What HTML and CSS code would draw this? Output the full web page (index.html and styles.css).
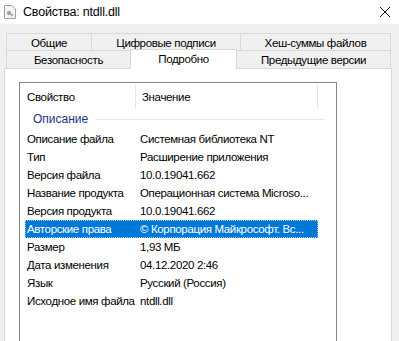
FILE: index.html
```html
<!DOCTYPE html>
<html lang="ru">
<head>
    <meta charset="UTF-8">
    <title>Свойства: ntdll.dll</title>
    <link rel="stylesheet" href="styles.css">
</head>
<body>
    <div class="titlebar">
        <svg class="app-icon" width="12" height="14" viewBox="0 0 12 14">
            <path d="M0.5 0.5 H8 L11.5 4 V13.5 H0.5 Z" fill="#f4f4f4" stroke="#a0a0a0"/>
            <circle cx="5" cy="8" r="2" fill="#9a9a9a"/>
            <circle cx="8" cy="10" r="1.4" fill="#b0b0b0"/>
        </svg>
        <span class="title">Свойства: ntdll.dll</span>
        <svg class="close" width="12" height="12" viewBox="0 0 12 12">
            <path d="M1 1 L11 11 M11 1 L1 11" stroke="#111" stroke-width="1"/>
        </svg>
    </div>

    <div class="window">
        <div class="tab-row back">
            <div class="tab w-general">Общие</div>
            <div class="tab w-sign">Цифровые подписи</div>
            <div class="tab w-hash">Хеш-суммы файлов</div>
        </div>
        <div class="tab-row front">
            <div class="tab w-sec">Безопасность</div>
            <div class="tab w-det active">Подробно</div>
            <div class="tab w-prev">Предыдущие версии</div>
        </div>

        <div class="panel">
            <div class="list">
                <div class="list-head">
                    <div class="col-name">Свойство</div>
                    <div class="col-value">Значение</div>
                    <div class="col-rest"></div>
                </div>
                <div class="group">
                    <span>Описание</span>
                    <div class="group-line"></div>
                </div>
                <div class="row"><div class="name">Описание файла</div><div class="value">Системная библиотека NT</div></div>
                <div class="row"><div class="name">Тип</div><div class="value">Расширение приложения</div></div>
                <div class="row"><div class="name">Версия файла</div><div class="value">10.0.19041.662</div></div>
                <div class="row"><div class="name">Название продукта</div><div class="value">Операционная система Microso...</div></div>
                <div class="row"><div class="name">Версия продукта</div><div class="value">10.0.19041.662</div></div>
                <div class="row selected"><div class="name">Авторские права</div><div class="value">© Корпорация Майкрософт. Вс...</div></div>
                <div class="row"><div class="name">Размер</div><div class="value">1,93 МБ</div></div>
                <div class="row"><div class="name">Дата изменения</div><div class="value">04.12.2020 2:46</div></div>
                <div class="row"><div class="name">Язык</div><div class="value">Русский (Россия)</div></div>
                <div class="row"><div class="name">Исходное имя файла</div><div class="value">ntdll.dll</div></div>
            </div>
        </div>
    </div>
</body>
</html>
```

FILE: styles.css
```css
body {
    margin: 0;
    padding: 0;
    width: 399px;
    height: 341px;
    overflow: hidden;
    font-family: 'Liberation Sans', Arial, sans-serif;
    font-size: 11.5px;
    letter-spacing: -0.35px;
    color: #000000;
    background-color: #f0f0f0;
}
.titlebar {
    height: 24px;
    background-color: #ffffff;
    display: flex;
    align-items: center;
    padding-left: 4px;
    padding-right: 8px;
}
.app-icon {
    margin-right: 7px;
}
.title {
    font-size: 12.5px;
    letter-spacing: -0.2px;
    flex: 1;
}
.window {
    padding-top: 9px;
}
.tab-row {
    display: flex;
    margin-left: 6px;
    width: 385px;
}
.tab {
    box-sizing: border-box;
    border: 1px solid #d9d9d9;
    border-bottom: none;
    margin-left: -1px;
    display: flex;
    justify-content: center;
    align-items: center;
    background-color: #f0f0f0;
    white-space: nowrap;
}
.tab:first-child {
    margin-left: 0;
}
.back .tab {
    height: 17px;
    padding-top: 1px;
}
.front {
    height: 18px;
    align-items: flex-end;
}
.front .tab {
    height: 18px;
    padding-top: 1px;
}
.front .tab.active {
    height: 20px;
    background-color: #ffffff;
    position: relative;
    z-index: 1;
    margin-bottom: -1px;
    padding-bottom: 2px;
}
.w-general { width: 86px; }
.w-sign { width: 150px; }
.w-hash { width: 151px; }
.w-sec { width: 125px; }
.w-det { width: 107px; }
.w-prev { width: 155px; }
.panel {
    margin-left: 4px;
    width: 388px;
    height: 280px;
    box-sizing: border-box;
    background-color: #ffffff;
    border: 1px solid #d9d9d9;
    padding: 13px 0 0 14px;
}
.list {
    width: 318px;
    height: 270px;
    box-sizing: border-box;
    border: 1px solid #828790;
    border-bottom: none;
    padding-left: 5px;
}
.list-head {
    display: flex;
    height: 25px;
    padding-top: 2px;
    box-sizing: border-box;
}
.list-head > div {
    display: flex;
    align-items: center;
    box-sizing: border-box;
}
.col-name {
    width: 111px;
    padding-left: 2px;
    border-right: 1px solid #e5e5e5;
}
.col-value {
    width: 182px;
    padding-left: 6px;
    border-right: 1px solid #e5e5e5;
}
.group {
    display: flex;
    align-items: center;
    height: 22px;
    padding-left: 8px;
    color: #1e3287;
    font-size: 12px;
    letter-spacing: 0;
}
.group-line {
    flex: 1;
    height: 1px;
    background-color: #e2e7f0;
    margin-left: 7px;
    margin-right: 12px;
}
.row {
    display: flex;
    height: 18px;
    align-items: center;
    width: 293px;
    box-sizing: border-box;
    white-space: nowrap;
}
.row .name {
    width: 115px;
    padding-left: 2px;
    box-sizing: border-box;
    overflow: hidden;
}
.row .value {
    flex: 1;
    overflow: hidden;
}
.row.selected {
    background-color: #0078d7;
    color: #ffffff;
    outline: 1px dotted #9fc9ee;
    outline-offset: -1px;
}
```
